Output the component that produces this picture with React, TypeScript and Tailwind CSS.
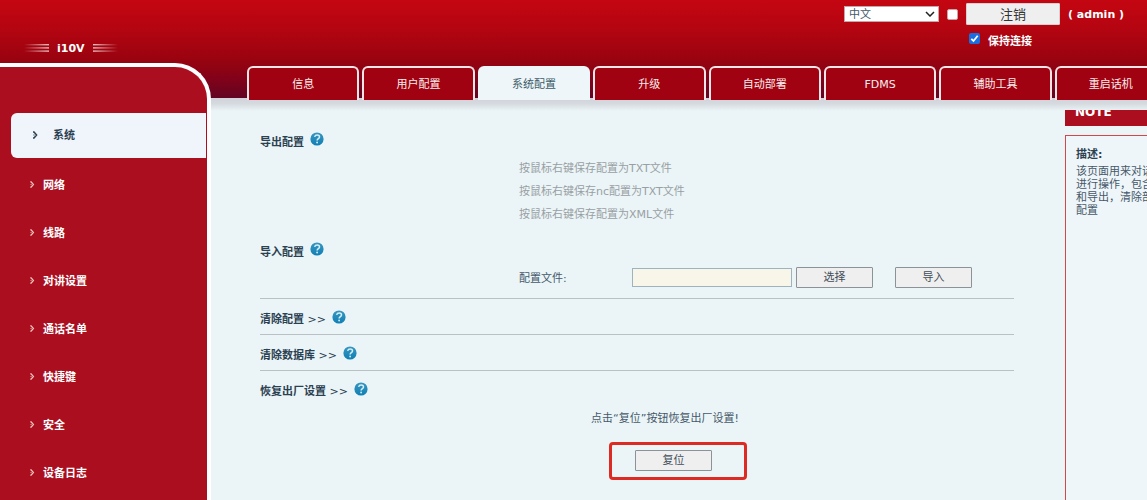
import React, { useState } from "react";

const MENU = ["网络", "线路", "对讲设置", "通话名单", "快捷键", "安全", "设备日志"];
const TABS = ["信息", "用户配置", "系统配置", "升级", "自动部署", "FDMS", "辅助工具", "重启话机"];
const EXPORTS = ["按鼠标右键保存配置为TXT文件", "按鼠标右键保存nc配置为TXT文件", "按鼠标右键保存配置为XML文件"];

function Chevron({ className }: { className: string }) {
  return (
    <svg viewBox="0 0 6 8" className={className} fill="none" stroke="currentColor" strokeWidth="1.5" aria-hidden="true">
      <path d="M1 1h1l2.6 3L2 7H1" />
      <path d="M1 4h2" strokeWidth="0.6" />
    </svg>
  );
}

function BrandLines({ id, flip }: { id: string; flip?: boolean }) {
  return (
    <svg width="25" height="8" viewBox="0 0 25 8" aria-hidden="true">
      <defs>
        <linearGradient id={id} x1={flip ? "1" : "0"} x2={flip ? "0" : "1"} y1="0" y2="0">
          <stop offset="0" stopColor="#fff" stopOpacity="0" />
          <stop offset="1" stopColor="#fff" stopOpacity="0.75" />
        </linearGradient>
      </defs>
      <g fill={`url(#${id})`}>
        <rect y="0" width="25" height="1.4" />
        <rect y="3.2" width="25" height="1.4" />
        <rect y="6.4" width="25" height="1.4" />
      </g>
    </svg>
  );
}

function HelpIcon() {
  return (
    <button type="button" aria-label="帮助" className="mb-1.5 shrink-0">
      <svg width="14" height="14" viewBox="0 0 14 14" className="block" aria-hidden="true">
        <defs>
          <linearGradient id="help" x1="0" y1="0" x2="0" y2="1">
            <stop offset="0" stopColor="#3a97bf" />
            <stop offset="1" stopColor="#0f7fb6" />
          </linearGradient>
        </defs>
        <circle cx="7" cy="7" r="6.6" fill="url(#help)" />
        <path d="M4.6 4.9C5 3.6 6 3.1 7.2 3.1c1.4 0 2.3.8 2.3 1.8 0 1.7-2.4 1.7-2.4 3.5" fill="none" stroke="#d6f0fa" strokeWidth="1.5" />
        <circle cx="7.1" cy="10.5" r="0.9" fill="#d6f0fa" />
      </svg>
    </button>
  );
}

function Heading({ children, more }: { children: React.ReactNode; more?: boolean }) {
  return (
    <div className="flex h-6 items-center gap-1.5">
      <h2 className="font-bold text-[#2b4152]">
        {children}
        {more && <span className="font-medium"> &gt;&gt;</span>}
      </h2>
      <HelpIcon />
    </div>
  );
}

function GrayButton({ children }: { children: React.ReactNode }) {
  return (
    <button type="button" className="flex h-[21px] w-[77px] shrink-0 items-center justify-center rounded-[1px] border border-[#8b9298] bg-[#efefef] pt-px text-[#3f4d58]">
      {children}
    </button>
  );
}

export default function App() {
  const [keep, setKeep] = useState(true);
  const [box, setBox] = useState(false);
  return (
    <div className="flex min-h-screen overflow-hidden bg-[linear-gradient(to_bottom,#c40611_0px,#b30511_30px,#98030f_60px,#80021a_80px,#620522_98px,#d0d3da_98px,#d6dbe0_104px,#ebf5f7_111px)] font-['DejaVu_Sans','Noto_Sans_CJK_SC',sans-serif] text-[11px] leading-[13px] text-[#46586a]">
      <div className="flex w-[211px] shrink-0 flex-col">
        <div className="flex h-[63px] items-end gap-2 pb-2 pl-6 font-bold text-white">
          <span className="pb-[3px]"><BrandLines id="lines-left" /></span>
          <span>i10V</span>
          <span className="pb-[3px]"><BrandLines id="lines-right" flip /></span>
        </div>
        <nav className="flex-1 rounded-tr-[36px] border-t-4 border-r-4 border-white bg-[#ab0f1f] pt-[46px] font-bold">
          <a href="#system" className="mr-px ml-[11px] flex h-[45px] items-center rounded-l-md bg-[#eff5fa] pl-[21px] text-[#2b4152]">
            <Chevron className="mr-[15px] mb-0.5 h-2 w-1.5" />
            系统
          </a>
          <ul className="pt-[3px]">
            {MENU.map((m) => (
              <li key={m}>
                <a href={`#${m}`} className="flex h-12 items-center pl-[29px] text-white">
                  <Chevron className="mr-2 mb-0.5 h-[7px] w-1.5 text-[#f3c3bd]" />
                  {m}
                </a>
              </li>
            ))}
          </ul>
        </nav>
      </div>

      <div className="flex min-w-0 flex-1 flex-col">
        <header className="flex h-[66px] justify-end pr-5 font-bold text-white">
          <div className="w-[283px] pt-[3px]">
            <div className="flex h-[22px] items-center gap-2">
              <div className="relative w-[95px] shrink-0">
                <select aria-label="语言" className="block h-4 w-full appearance-none border border-[#c9a5a8] bg-white pl-1 text-[11px] leading-[13px] font-normal text-[#46586a]">
                  <option>中文</option>
                  <option>English</option>
                </select>
                <svg viewBox="0 0 10 6" className="pointer-events-none absolute top-[5px] right-1 h-1.5 w-2.5" fill="none" stroke="#222" strokeWidth="1.5" aria-hidden="true">
                  <path d="M1 1l4 4 4-4" />
                </svg>
              </div>
              <input type="checkbox" aria-label="注销确认" checked={box} onChange={() => setBox(!box)} className="size-[11px] shrink-0 appearance-none rounded-[2px] border border-[#c9a5a8] bg-white checked:bg-[#1a6fe0]" />
              <button type="button" className="h-[22px] w-[94px] shrink-0 rounded-[1px] border border-[#d8d0d0] bg-[#efefef] text-[13px] font-normal text-[#333]">
                注销
              </button>
              <span className="whitespace-nowrap">( admin )</span>
            </div>
            <label className="mt-1.5 flex h-5 items-center gap-2 pl-[125px]">
              <span className="relative mb-1.5 size-[11px] shrink-0">
                <input type="checkbox" checked={keep} onChange={() => setKeep(!keep)} className="block size-[11px] appearance-none rounded-[2px] bg-white checked:bg-[#1a6fe0]" />
                {keep && (
                  <svg viewBox="0 0 11 11" className="pointer-events-none absolute inset-0" fill="none" stroke="#fff" strokeWidth="1.8" aria-hidden="true">
                    <path d="M2.3 5.8l2.2 2.2 4.2-5.2" />
                  </svg>
                )}
              </span>
              保持连接
            </label>
          </div>
        </header>

        <div className="overflow-hidden">
          <nav className="-mr-5 grid h-[34px] grid-cols-8 gap-[3px] pl-9">
            {TABS.map((t) =>
              t === "系统配置" ? (
                <a key={t} href={`#${t}`} aria-current="page" className="flex items-center justify-center rounded-t-md bg-[#eef6fa] pt-0.5 text-[#3d5c68]">
                  {t}
                </a>
              ) : (
                <a key={t} href={`#${t}`} className="flex items-center justify-center rounded-t-md border-2 border-b-0 border-[#f6e6e8] bg-[#a00211] text-[#fbeeee]">
                  {t}
                </a>
              ),
            )}
          </nav>
        </div>

        <div className="mt-2.5 flex flex-1 gap-[51px] overflow-hidden pl-[49px]">
          <main className="min-w-0 flex-1 pt-5">
            <Heading>导出配置</Heading>
            <ul className="mt-[3px] pl-[259px] text-[#999fa4]">
              {EXPORTS.map((e) => (
                <li key={e} className="flex h-[23px] items-center">
                  <a href="#export">{e}</a>
                </li>
              ))}
            </ul>
            <div className="mt-[14px]">
              <Heading>导入配置</Heading>
            </div>
            <div className="mt-0.5 flex h-[22px] items-center pl-[259px]">
              <label htmlFor="file" className="w-[113px] shrink-0 pt-0.5">配置文件:</label>
              <input id="file" type="text" className="h-[19px] w-40 border border-[#9db4c0] bg-[#f8f6e8] px-1" />
              <div className="flex gap-[22px] pl-1">
                <GrayButton>选择</GrayButton>
                <GrayButton>导入</GrayButton>
              </div>
            </div>
            <div className="mt-2.5">
              {["清除配置", "清除数据库", "恢复出厂设置"].map((s) => (
                <section key={s} className="flex h-9 items-center border-t border-[#b9c1c5] pt-1.5">
                  <Heading more>{s}</Heading>
                </section>
              ))}
            </div>
            <p className="flex h-6 items-center pl-[331px]">点击“复位”按钮恢复出厂设置!</p>
            <div className="mt-3 ml-[349px] flex h-[38px] w-[138px] items-center rounded-[4px] border-3 border-[#dd2a22] pb-0.5 pl-[23px]">
              <GrayButton>复位</GrayButton>
            </div>
          </main>

          <aside className="flex w-[82px] shrink-0 flex-col overflow-hidden whitespace-nowrap">
            <div className="flex h-4 items-end overflow-hidden bg-[#ab0f1f] pb-[7px] pl-2.5 text-xs leading-[14px] font-bold text-white">
              NOTE
            </div>
            <div className="mt-[9px] flex-1 border-t border-l border-t-[#d4464e] border-l-[#d4464e] bg-[#eff6f9] pt-3 pl-2.5">
              <h3 className="font-bold text-[#2b4152]">描述:</h3>
              <p className="pt-1">
                该页面用来对话<br />进行操作，包含<br />和导出，清除部<br />配置
              </p>
            </div>
          </aside>
        </div>
      </div>
    </div>
  );
}
